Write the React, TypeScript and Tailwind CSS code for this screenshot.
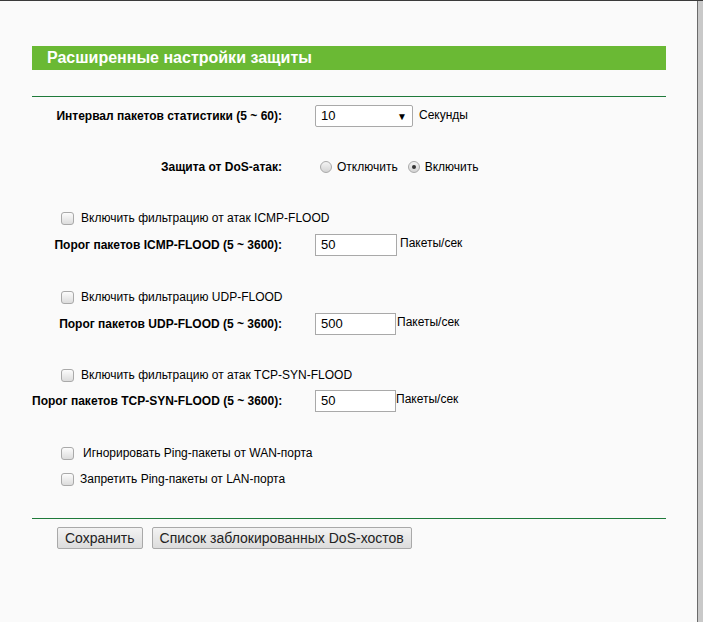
import React from "react";

const font = { fontFamily: '"Liberation Sans", Arial, sans-serif' };

function Checkbox() {
  return (
    <span className="inline-block w-[13px] h-[13px] rounded-[3px] border border-[#a9a9a9] bg-gradient-to-b from-[#fcfcfc] to-[#dcdcdc] shrink-0" />
  );
}

function Radio({ checked }: { checked?: boolean }) {
  return (
    <span className="inline-flex items-center justify-center w-[12px] h-[12px] rounded-full border border-[#a9a9a9] bg-gradient-to-b from-[#f4f4f4] to-[#d4d4d4] shrink-0">
      {checked && <span className="block w-[4px] h-[4px] rounded-full bg-[#333]" />}
    </span>
  );
}

function LabelRow({
  label,
  children,
  className,
}: {
  label: string;
  children: React.ReactNode;
  className: string;
}) {
  return (
    <div className={`flex items-center h-[22px] ${className}`}>
      <div className="w-[250px] text-right font-bold text-[12px] text-black whitespace-nowrap">
        {label}
      </div>
      <div className="ml-[33px] flex items-center">{children}</div>
    </div>
  );
}

function NumInput({ value, w }: { value: string; w: string }) {
  return (
    <div
      className={`${w} h-[22px] bg-white border border-[#a9a9a9] flex items-center pl-[5px] text-[13px] text-black`}
    >
      {value}
    </div>
  );
}

function CheckRow({ text, className, gap }: { text: string; className: string; gap: string }) {
  return (
    <div className={`flex items-center h-[20px] pl-[29px] ${className}`}>
      <Checkbox />
      <span className={`${gap} text-[12px] text-black whitespace-nowrap`}>{text}</span>
    </div>
  );
}

export default function App() {
  return (
    <div style={font} className="w-[703px] h-[622px] flex bg-[#fafafa] border-t border-[#3a3a3a] overflow-hidden">
      <div className="flex-1 pl-[32px] pr-[31px] pt-[45px]">
        <div className="h-[24px] bg-[#6ab934] flex items-center pl-[15px]">
          <span className="text-white font-bold text-[16px] leading-none">
            Расширенные настройки защиты
          </span>
        </div>
        <div className="mt-[26px] h-[1px] bg-[#1f7a3a]" />

        <LabelRow label="Интервал пакетов статистики (5 ~ 60):" className="mt-[8px]">
          <div className="w-[98px] h-[22px] bg-white border border-[#a9a9a9] rounded-[2px] flex items-center justify-between pl-[5px] pr-[5px] text-[13px] text-black">
            <span>10</span>
            <span className="text-[10px]">▼</span>
          </div>
          <span className="ml-[6px] text-[12px] text-black self-start mt-[1px]">Секунды</span>
        </LabelRow>

        <LabelRow label="Защита от DoS-атак:" className="mt-[29px]">
          <span className="ml-[5px] flex items-center">
            <Radio />
            <span className="ml-[5px] text-[12px] text-black">Отключить</span>
          </span>
          <span className="ml-[10px] flex items-center">
            <Radio checked />
            <span className="ml-[5px] text-[12px] text-black">Включить</span>
          </span>
        </LabelRow>

        <CheckRow text="Включить фильтрацию от атак ICMP-FLOOD" className="mt-[30px]" gap="ml-[7px]" />
        <LabelRow label="Порог пакетов ICMP-FLOOD (5 ~ 3600):" className="mt-[6px]">
          <NumInput value="50" w="w-[82px]" />
          <span className="ml-[3px] text-[12px] text-black self-start">Пакеты/сек</span>
        </LabelRow>

        <CheckRow text="Включить фильтрацию UDP-FLOOD" className="mt-[31px]" gap="ml-[7px]" />
        <LabelRow label="Порог пакетов UDP-FLOOD (5 ~ 3600):" className="mt-[6px]">
          <NumInput value="500" w="w-[81px]" />
          <span className="ml-[1px] text-[12px] text-black self-start">Пакеты/сек</span>
        </LabelRow>

        <CheckRow text="Включить фильтрацию от атак TCP-SYN-FLOOD" className="mt-[30px]" gap="ml-[7px]" />
        <LabelRow label="Порог пакетов TCP-SYN-FLOOD (5 ~ 3600):" className="mt-[5px]">
          <NumInput value="50" w="w-[81px]" />
          <span className="text-[12px] text-black self-start">Пакеты/сек</span>
        </LabelRow>

        <CheckRow text="Игнорировать Ping-пакеты от WAN-порта" className="mt-[31px]" gap="ml-[9px]" />
        <CheckRow text="Запретить Ping-пакеты от LAN-порта" className="mt-[6px]" gap="ml-[6px]" />

        <div className="mt-[29px] h-[1px] bg-[#1f7a3a]" />

        <div className="mt-[8px] flex pl-[25px] gap-[9px]">
          <button className="h-[22px] px-[7px] border border-[#a9a9a9] rounded-[2px] bg-gradient-to-b from-[#f3f3f3] to-[#dcdcdc] text-[14px] text-[#222] leading-none">
            Сохранить
          </button>
          <button className="h-[22px] px-[7px] border border-[#a9a9a9] rounded-[2px] bg-gradient-to-b from-[#f3f3f3] to-[#dcdcdc] text-[14px] text-[#222] leading-none">
            Список заблокированных DoS-хостов
          </button>
        </div>
      </div>
      <div className="w-[6px] h-full bg-[#c9c9c9] border-l border-[#6b6b6b]" />
    </div>
  );
}
